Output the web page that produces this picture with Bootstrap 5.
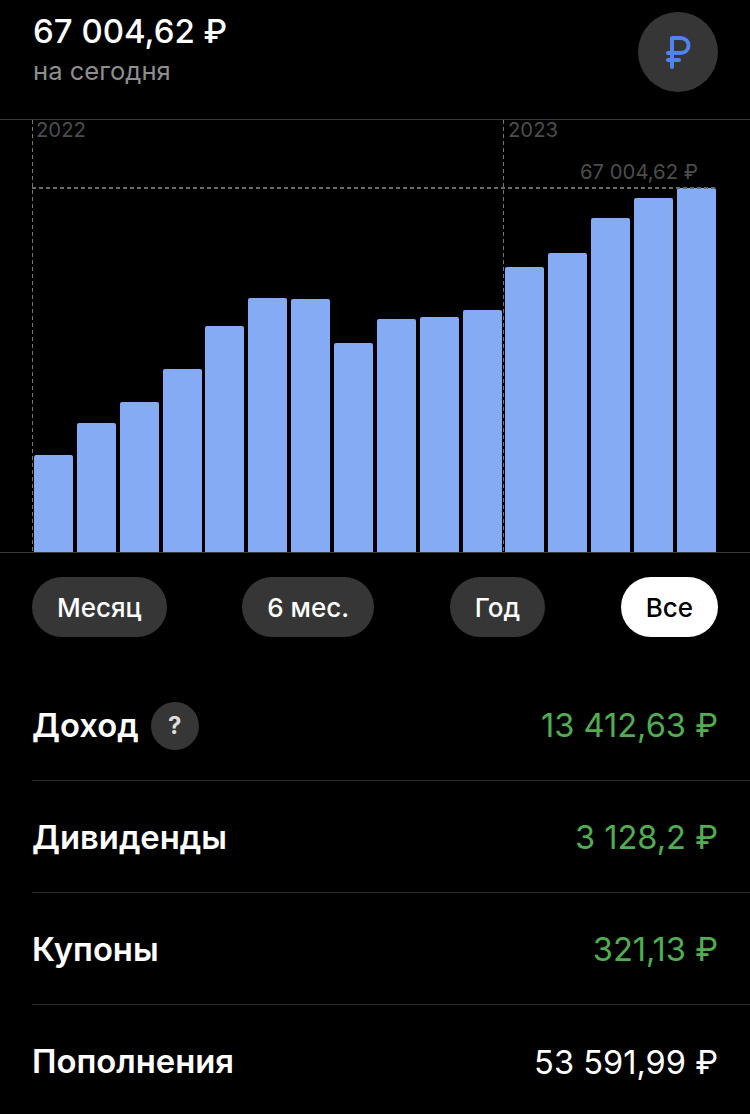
<!DOCTYPE html>
<html lang="ru">
<head>
  <meta charset="UTF-8" />
  <meta name="viewport" content="width=device-width, initial-scale=1.0"/>
  <title>Портфель</title>
  <link href="https://cdn.jsdelivr.net/npm/bootstrap@5.3.0/dist/css/bootstrap.min.css" rel="stylesheet">
  <style>
    body {
      background: #000;
      color: #fff;
      font-family: Inter, "Liberation Sans", sans-serif;
      height: 1114px;
      overflow: hidden;
    }
    .top-head {
      height: 120px;
      padding: 12px 32px 0 33px;
      border-bottom: 1px solid #3a3a3a;
    }
    .total-sum {
      font-size: 33px;
      font-weight: 500;
      line-height: 39px;
    }
    .total-sub {
      font-size: 25.6px;
      line-height: 30px;
      margin-top: 5px;
      color: #8e8e8e;
    }
    .cur-circle {
      width: 80px;
      height: 80px;
      background: #363636;
    }
    .chart-box {
      height: 433px;
      padding-left: 34px;
      padding-right: 34px;
      border-bottom: 1px solid #3a3a3a;
    }
    .bar-item {
      width: 39px;
      background: #86abf5;
      border-radius: 2px 2px 0 0;
    }
    .line-v {
      position: absolute;
      top: 0;
      bottom: 0;
      width: 1px;
      background: repeating-linear-gradient(to bottom, #777 0 4px, transparent 4px 7px);
    }
    .line-h {
      position: absolute;
      left: 32px;
      right: 34px;
      top: 67px;
      height: 2px;
      background: repeating-linear-gradient(to right, #6a6a6a 0 4px, transparent 4px 7px);
    }
    .chart-note {
      position: absolute;
      font-size: 20.3px;
      line-height: 24px;
      color: #4d4d4d;
    }
    .period-row {
      padding: 24px 32px 0;
    }
    .period-btn {
      height: 60px;
      padding: 0 25px;
      font-size: 26px;
      font-weight: 500;
      background: #363636;
      color: #fff;
      border-radius: 30px;
      border: 0;
    }
    .period-btn.on {
      background: #fff;
      color: #000;
    }
    .info-list {
      margin-top: 32px;
      padding-left: 32px;
    }
    .info-row {
      height: 112px;
      padding-top: 2px;
      padding-right: 32px;
      border-bottom: 1px solid #2b2b2b;
    }
    .info-row:last-child {
      border-bottom: 0;
    }
    .info-name {
      font-size: 32.8px;
      font-weight: 600;
    }
    .info-val {
      font-size: 32.6px;
      font-weight: 400;
    }
    .val-green {
      color: #4fae50;
    }
    .help-dot {
      width: 48px;
      height: 48px;
      margin-left: 12px;
      background: #363636;
      font-size: 24px;
      font-weight: 700;
      color: #ddd;
    }
  </style>
</head>
<body>

<div class="top-head d-flex justify-content-between align-items-start">
  <div>
    <div class="total-sum">67 004,62 ₽</div>
    <div class="total-sub">на сегодня</div>
  </div>
  <div class="cur-circle rounded-circle d-flex align-items-center justify-content-center">
    <svg width="26" height="36" viewBox="0 0 26 36" fill="none" stroke="#4f83f0" stroke-width="4" stroke-linecap="round" stroke-linejoin="round">
      <path d="M7 33V4H15C20.5 4 23.5 7.5 23.5 11.5C23.5 15.5 20.5 19 15 19H3"/>
      <path d="M3 26H14"/>
    </svg>
  </div>
</div>

<div class="chart-box position-relative d-flex align-items-end justify-content-between" id="chart">
  <div class="line-v" style="left: 32px"></div>
  <div class="line-v" style="left: 503px"></div>
  <div class="line-h"></div>
  <div class="chart-note" style="left: 36px; top: -2px">2022</div>
  <div class="chart-note" style="left: 508px; top: -2px">2023</div>
  <div class="chart-note" style="right: 52px; top: 40px">67 004,62 ₽</div>
</div>

<div class="period-row d-flex justify-content-between">
  <button class="period-btn btn">Месяц</button>
  <button class="period-btn btn">6 мес.</button>
  <button class="period-btn btn">Год</button>
  <button class="period-btn btn on">Все</button>
</div>

<div class="info-list">
  <div class="info-row d-flex align-items-center justify-content-between">
    <div class="d-flex align-items-center">
      <span class="info-name">Доход</span>
      <span class="help-dot rounded-circle d-flex align-items-center justify-content-center">?</span>
    </div>
    <span class="info-val val-green">13 412,63 ₽</span>
  </div>
  <div class="info-row d-flex align-items-center justify-content-between">
    <span class="info-name">Дивиденды</span>
    <span class="info-val val-green">3 128,2 ₽</span>
  </div>
  <div class="info-row d-flex align-items-center justify-content-between">
    <span class="info-name">Купоны</span>
    <span class="info-val val-green">321,13 ₽</span>
  </div>
  <div class="info-row d-flex align-items-center justify-content-between">
    <span class="info-name">Пополнения</span>
    <span class="info-val">53 591,99 ₽</span>
  </div>
</div>

<script>
  const barHeights = [97, 129, 150, 183, 226, 254, 253, 209, 233, 235, 242, 285, 299, 334, 354, 364];
  const chart = document.getElementById('chart');
  barHeights.forEach(h => {
    const bar = document.createElement('div');
    bar.className = 'bar-item';
    bar.style.height = h + 'px';
    chart.appendChild(bar);
  });
</script>
<script src="https://cdn.jsdelivr.net/npm/bootstrap@5.3.0/dist/js/bootstrap.bundle.min.js"></script>
</body>
</html>
